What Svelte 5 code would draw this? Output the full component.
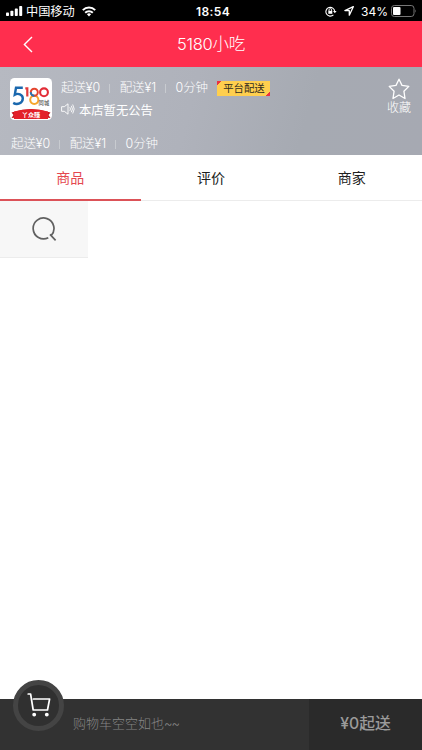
<script>
  const facts = ['起送¥0', '配送¥1', '0分钟'];
  const tabs = ['商品', '评价', '商家'];
  let active = $state(0);
</script>

<div class="screen">
  <div class="status">
    <div class="carrier">
      <svg width="17" height="10" viewBox="0 0 17 10" fill="#fff"><rect x="0" y="6.5" width="3" height="3.5" rx=".8"/><rect x="4.4" y="4.8" width="3" height="5.2" rx=".8"/><rect x="8.8" y="2.6" width="3" height="7.4" rx=".8"/><rect x="13.2" y="0" width="3" height="10" rx=".8"/></svg>
      <span>中国移动</span>
      <svg class="wifi" width="14" height="11" viewBox="0 0 14 11" fill="none" stroke="#fff" stroke-width="2"><path d="M.8 4.1a8.8 8.8 0 0 1 12.4 0M3.2 6.7a5.4 5.4 0 0 1 7.6 0"/><path d="M4.9 8.2a3.1 3.1 0 0 1 4.2 0L7 10.6z" fill="#fff" stroke="none"/></svg>
    </div>
    <div class="time">18:54</div>
    <div class="power">
      <svg class="lock" width="12" height="11" viewBox="0 0 12 11" fill="none" stroke="#fff"><path d="M8.4 8.9A4.4 4.4 0 1 1 9.7 5.4" stroke-width="1.1"/><path d="M8 5h3.6L9.8 7.3z" fill="#fff" stroke="none"/><rect x="3.3" y="4.8" width="4" height="3" fill="#fff" stroke="none"/><path d="M4 5V3.9a1.3 1.3 0 0 1 2.6 0V5" stroke-width=".9"/></svg>
      <svg class="arrow" width="10" height="10" viewBox="0 0 10 10" fill="none" stroke="#fff" stroke-width="1.3" stroke-linejoin="round"><path d="M9.3.7.9 4.6h4.4v4.6z"/></svg>
      <span>34%</span>
      <svg width="26" height="12" viewBox="0 0 26 12"><rect x=".5" y=".5" width="22.5" height="11" rx="2.8" fill="none" stroke="#777"/><rect x="2" y="2" width="7.5" height="8" rx="1" fill="#fff"/><path d="M24.2 4.2q1.5 1.8 0 3.6z" fill="#777"/></svg>
    </div>
  </div>

  <header>
    <svg width="10" height="17" viewBox="0 0 10 17" fill="none" stroke="#fff" stroke-width="1.4"><path d="M9 1 1.4 8.4 9 16"/></svg>
    <h1>5180小吃</h1>
  </header>

  <section class="shop">
    <div class="top">
      <svg class="logo" width="42" height="42" viewBox="0 0 42 42">
        <rect width="42" height="42" rx="4.5" fill="#fff"/>
        <path d="M12.8 9.8H6L4.8 16.7C8 14.8 12.8 16.3 12.8 20.6c0 4.7-5.6 6.6-9.6 4.3" fill="none" stroke="#1a68ae" stroke-width="2.4"/>
        <path d="M15.3 10.3h2v8.2" fill="none" stroke="#e23b3b" stroke-width="2.2"/>
        <circle cx="24.3" cy="21.8" r="4.1" fill="none" stroke="#f5a62d" stroke-width="2"/>
        <circle cx="24.3" cy="14.2" r="3.5" fill="none" stroke="#e4452f" stroke-width="2"/>
        <path d="M20.8 14.2a3.5 3.5 0 0 0 3.5 3.5" fill="none" stroke="#1e78b9" stroke-width="2"/>
        <circle cx="34" cy="14.3" r="3.9" fill="none" stroke="#e22c37" stroke-width="2.1"/>
        <text x="28.6" y="26.6" font-size="5.3" font-weight="500" fill="#555">同城</text>
        <path d="M1.5 34.5q19.500-7 39 0l-2 2.500 2 3q-19.500-3-39 0l2-3z" fill="#c5131c"/>
        <path d="M4 33.500q17-4.500 34 0V41H4z" fill="#e3202a"/>
        <text x="21" y="38.8" font-size="6.2" font-weight="700" text-anchor="middle" fill="#fff">丫众赚</text>
      </svg>
      <div class="info">
        <div class="facts">
          {#each facts as fact}<span>{fact}</span>{/each}
          <b class="badge">平台配送</b>
        </div>
        <div class="notice">
          <svg width="14" height="12" viewBox="0 0 14 12" fill="none" stroke="#fff" stroke-width=".9" stroke-linejoin="round"><path d="M.6 3.7h2.7L7 .8v10.4L3.3 8.3H.6z"/><path d="M8.8 4.2q1.300 1.800 0 3.600M10.3 2.800q2.300 3.200 0 6.400M11.7 1.500q3 4.500 0 9"/></svg>
          <span>本店暂无公告</span>
        </div>
      </div>
      <div class="favorite">
        <svg width="22" height="22" viewBox="0 0 22 22" fill="none" stroke="#fff" stroke-width="1.3" stroke-linejoin="round"><path d="m11 1.2 3 6.2 6.8 1-4.9 4.8 1.1 7.3-6-3.5-6 3.5 1.1-7.3-4.9-4.8 6.8-1z"/></svg>
        <span>收藏</span>
      </div>
    </div>
    <div class="facts lower">
      {#each facts as fact}<span>{fact}</span>{/each}
    </div>
  </section>

  <nav>
    {#each tabs as tab, i}
      <button class:active={active === i} onclick={() => (active = i)}>{tab}</button>
    {/each}
  </nav>

  <main>
    <div class="search">
      <svg width="26" height="26" viewBox="0 0 26 26" fill="none" stroke="#606060" stroke-width="1.7"><path d="M16.300 21.700A10.400 10.400 0 1 1 19.200 19.500"/><path d="m18 18.400 5.600 5.900"/></svg>
    </div>
  </main>

  <footer>
    <div class="cart">
      <svg width="24" height="24" viewBox="0 0 24 24" fill="none" stroke="#fff" stroke-width="1.7" stroke-linecap="round" stroke-linejoin="round"><path d="M1.2 1h2.4l2.6 16h14.3L22.6 6H6.5"/><circle cx="7.2" cy="21.6" r="1.1" fill="#fff"/><circle cx="19.8" cy="21.6" r="1.1" fill="#fff"/></svg>
    </div>
    <p>购物车空空如也<i>~~</i></p>
    <div class="minimum">¥0起送</div>
  </footer>
</div>

<style>
  :global(body) { margin: 0; }
  .screen {
    width: 422px; height: 750px; display: flex; flex-direction: column;
    background: #fff; overflow: hidden;
    font-family: Inter, "Noto Sans CJK SC", sans-serif; font-weight: 300;
  }
  svg { display: block; flex: none; }
  .status {
    height: 21px; flex: none; display: grid; grid-template-columns: 1fr auto 1fr;
    align-items: center; background: #000; color: #fff; font-size: 12.2px; line-height: 21px;
  }
  .carrier, .power { display: flex; align-items: center; }
  .carrier { padding-left: 6px; gap: 3px; }
  .carrier span { font-weight: 400; padding-top: 1px; }
  .carrier .wifi { margin-left: 4px; }
  .time { font-size: 12px; font-weight: 600; letter-spacing: .4px; padding-left: 4px; }
  .power { justify-content: flex-end; padding-right: 5px; font-weight: 400; font-size: 12px; }
  .power span { margin-right: 3px; }
  .lock { margin-right: 7px; }
  .arrow { margin-right: 7px; }
  header {
    height: 46px; flex: none; display: grid; grid-template-columns: 1fr auto 1fr;
    align-items: center; background: #ff2e4e; color: #fff;
  }
  header svg { margin-left: 23px; }
  h1 { margin: 0; font-size: 16.5px; line-height: 24px; font-weight: 300; letter-spacing: -.3px; }
  .shop {
    height: 88px; flex: none; box-sizing: border-box; padding: 11px 10px 0;
    background: linear-gradient(105deg, #b6b9c1 0%, #afb2bb 45%, #a6aab2 72%, #a6a9b2 100%);
    color: #fff;
  }
  .top { display: flex; height: 56px; }
  .info { margin-left: 9px; flex: 1; }
  .facts { display: flex; align-items: center; height: 20px; font-size: 12.5px; line-height: 20px; letter-spacing: -.1px; white-space: nowrap; }
  .facts span + span { display: flex; align-items: center; }
  .facts span + span::before { content: ""; width: 1px; height: 9px; background: #c8cbd0; margin: 0 9.3px; }
  .badge {
    margin: 1px 0 0 9.500px; width: 53px; height: 15px; letter-spacing: 0;
    font-size: 10.4px; line-height: 15px; font-weight: 400; text-align: center; color: #2e2b20;
    background: linear-gradient(135deg, #e93342 3px, transparent 3px),
      linear-gradient(-45deg, #e93342 3px, transparent 3px), #ffcf4e;
  }
  .notice { display: flex; align-items: center; gap: 4px; height: 20px; margin-top: 3px; font-size: 12.3px; line-height: 20px; font-weight: 400; }
  .notice svg { margin-top: -4px; }
  .favorite { width: 26px; display: flex; flex-direction: column; align-items: center; font-size: 12px; line-height: 16px; }
  .favorite span { white-space: nowrap; }
  .lower { margin-left: 1px; }
  nav { height: 46px; flex: none; box-sizing: border-box; display: flex; border-bottom: 1px solid #ececec; }
  button {
    flex: 1; padding: 0; border: 0; border-bottom: 2px solid transparent; margin-bottom: -1px;
    background: none; font: inherit; font-size: 14px; color: #202020; font-weight: 400;
  }
  button.active { color: #e4484f; border-color: #dc5258; }
  main { flex: 1; }
  .search {
    width: 88px; height: 57px; box-sizing: border-box; display: flex; align-items: center;
    justify-content: center; background: #f7f7f7; border-bottom: 1px solid #ececec;
  }
  .search svg { margin-left: 2px; }
  footer { position: relative; height: 51px; flex: none; display: flex; background: #323232; }
  .cart {
    position: absolute; left: 13px; top: -19px; width: 51px; height: 51px; box-sizing: border-box;
    border: 5px solid #444; border-radius: 50%; background: #303030;
    display: flex; align-items: center; justify-content: center;
  }
  .cart svg { margin: -2px 0 0 0; }
  footer p { margin: 0; padding-left: 73px; flex: 1; font-size: 13px; line-height: 49px; color: #858585; }
  footer i { font-style: normal; letter-spacing: -1px; }
  .minimum { width: 113px; background: #2a2a2a; color: #9a9a9a; font-size: 15.8px; line-height: 49px; font-weight: 500; text-align: center; }
</style>
